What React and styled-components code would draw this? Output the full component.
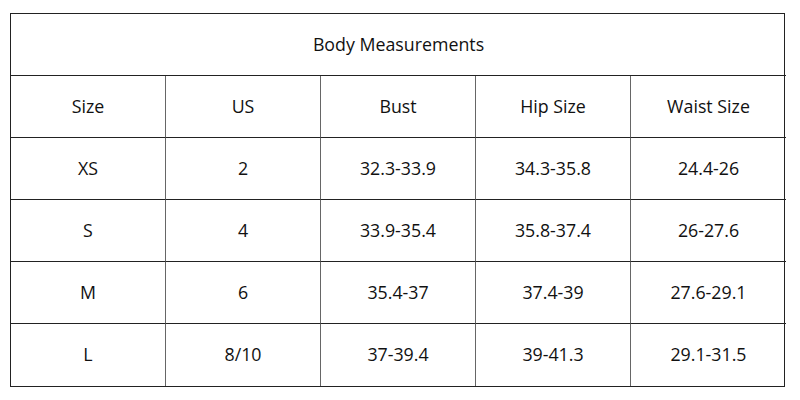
import styled, { createGlobalStyle } from "styled-components";

const GlobalStyle = createGlobalStyle`
    html, body {
        margin: 0;
        padding: 0;
        background: #ffffff;
    }
`
const Page = styled.div`
    width: 800px;
    height: 400px;
    padding: 13px 0 0 10px;
    box-sizing: border-box;
`
const Table = styled.div`
    width: 775px;
    display: grid;
    grid-template-columns: repeat(5, 155px);
    grid-auto-rows: 62px;
    border: 1px solid #222;
    box-sizing: border-box;
    font-family: "Open Sans", "Liberation Sans", sans-serif;
    font-size: 17.8px;
    color: #111;
`
const Title = styled.div`
    grid-column: 1 / -1;
    display: flex;
    align-items: center;
    justify-content: center;
    padding-bottom: 2px;
    border-bottom: 1px solid #222;
`
const Cell = styled.div`
    display: flex;
    align-items: center;
    justify-content: center;
    padding-bottom: 2px;
    border-right: ${(props) => props.last ? "none" : "1.5px solid #666"};
    border-bottom: ${(props) => props.bottom ? "none" : "1px solid #222"};
`

const headers = ["Size", "US", "Bust", "Hip Size", "Waist Size"]
const rows = [
    ["XS", "2", "32.3-33.9", "34.3-35.8", "24.4-26"],
    ["S", "4", "33.9-35.4", "35.8-37.4", "26-27.6"],
    ["M", "6", "35.4-37", "37.4-39", "27.6-29.1"],
    ["L", "8/10", "37-39.4", "39-41.3", "29.1-31.5"],
]

const App = () => {
    const all = [headers, ...rows]
    return(
        <>
            <GlobalStyle/>
            <Page>
                <Table>
                    <Title>Body Measurements</Title>
                    {all.map((row, r)=>
                        row.map((text, c)=>
                            <Cell key={r + "-" + c} last={c === row.length - 1} bottom={r === all.length - 1}>{text}</Cell>
                        )
                    )}
                </Table>
            </Page>
        </>
    )
}

export default App;
